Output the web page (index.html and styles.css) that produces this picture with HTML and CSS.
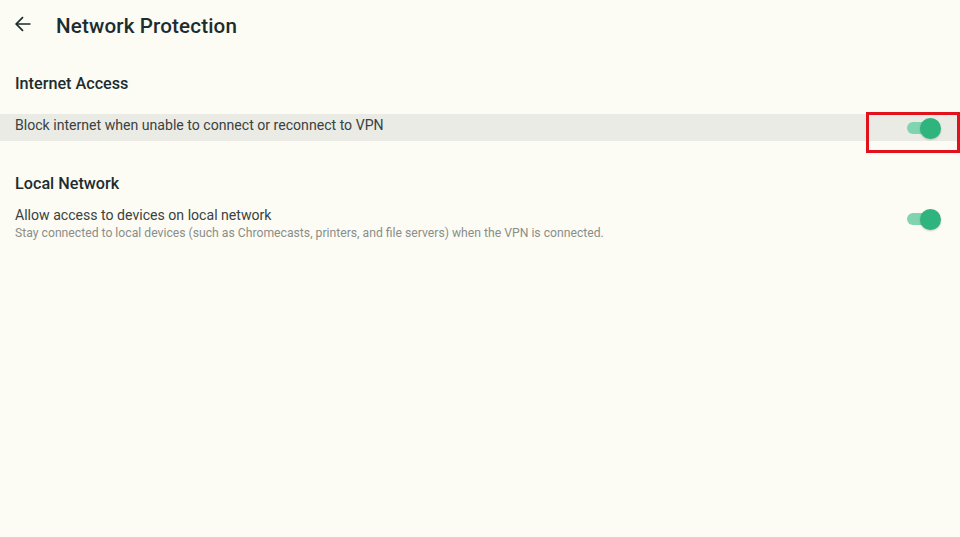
FILE: index.html
```html
<!DOCTYPE html>
<html>
<head>
<meta charset="utf-8">
<link rel="stylesheet" href="styles.css">
</head>
<body>
<header class="topbar">
  <svg class="back" width="18" height="18" viewBox="0 0 18 18"><path d="M16.5 9H2.2M9 2.2L2.2 9 9 15.8" fill="none" stroke="#1b2b2b" stroke-width="1.7"/></svg>
  <h1 class="title">Network Protection</h1>
</header>
<section class="group">
  <h2 class="group-title">Internet Access</h2>
  <div class="row row-focus">
    <div class="row-text"><div class="row-label">Block internet when unable to connect or reconnect to VPN</div></div>
    <div class="switch"><span class="track"></span><span class="thumb"></span></div>
    <div class="highlight"></div>
  </div>
</section>
<section class="group group-2">
  <h2 class="group-title">Local Network</h2>
  <div class="row">
    <div class="row-text">
      <div class="row-label">Allow access to devices on local network</div>
      <div class="row-sub">Stay connected to local devices (such as Chromecasts, printers, and file servers) when the VPN is connected.</div>
    </div>
    <div class="switch"><span class="track"></span><span class="thumb"></span></div>
  </div>
</section>
</body>
</html>
```
FILE: styles.css
```css
html, body { margin: 0; padding: 0; }
body {
  width: 960px; height: 537px; overflow: hidden;
  background: #fcfcf4;
  font-family: Roboto, "Noto Sans", sans-serif;
  color: #1b2b2b;
}
.topbar { display: flex; align-items: center; height: 50px; padding-left: 14px; }
.back { margin-top: -2px; }
.title { margin: 2px 0 0 24px; font-size: 20.6px; font-weight: 500; letter-spacing: 0.15px; color: #1d2c2e; }
.group { display: flex; flex-direction: column; }
.group-title { margin: 23px 0 0 15px; font-size: 16.2px; font-weight: 500; line-height: 22px; height: 22px; color: #1d2c2e; }
.row { position: relative; display: flex; align-items: center; justify-content: space-between; }
.row-focus { margin-top: 19px; height: 27px; background: #ebebe5; }
.row-text { padding-left: 15px; }
.row-label { font-size: 14.1px; color: #3a4242; line-height: 16px; }
.row-focus .row-label { margin-top: -6px; }
.row-sub { font-size: 12.2px; color: #8a8e8a; line-height: 14px; margin-top: 3px; }
.group-2 .group-title { margin-top: 32px; }
.group-2 .row { margin-top: 12px; }
.switch { position: relative; width: 36px; height: 20px; margin-right: 19px; }
.row-focus .switch { margin-top: 1px; }
.group-2 .switch { margin-top: -10px; }
.track { position: absolute; left: 2px; top: 4px; width: 30px; height: 12px; border-radius: 6px; background: #80d4b0; }
.thumb { position: absolute; left: 15px; top: 0; width: 21px; height: 21px; border-radius: 50%; background: #2fb47e; box-shadow: 0 1px 2px rgba(0,0,0,0.2); }
.highlight { position: absolute; left: 866px; top: -2px; width: 94px; height: 41px; box-sizing: border-box; border: 3px solid #e2121c; }
```
